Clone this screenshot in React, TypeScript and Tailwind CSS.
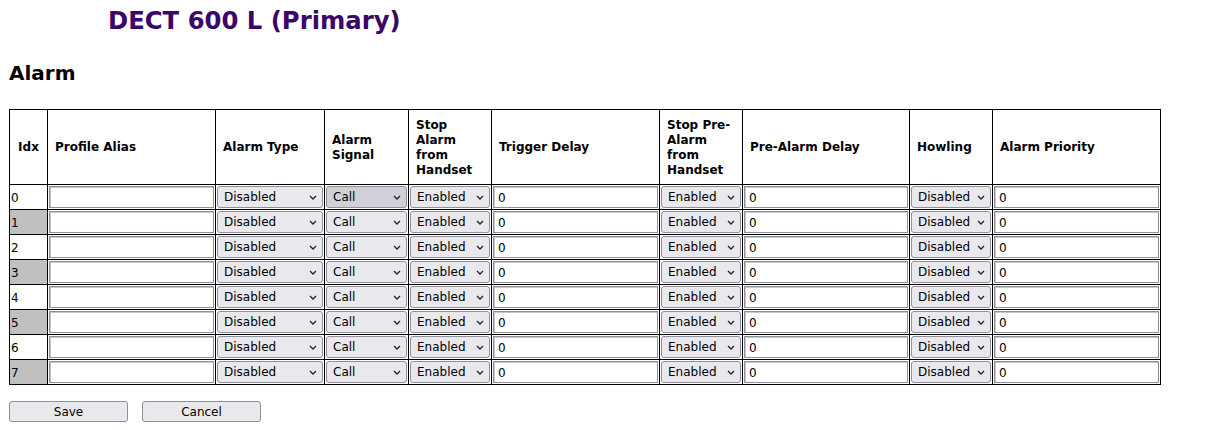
import React from "react";

const COLS = [38, 168, 109, 84, 83, 168, 83, 167, 83, 168];

const HEADERS = [
  "Idx",
  "Profile Alias",
  "Alarm Type",
  "Alarm Signal",
  "Stop Alarm from Handset",
  "Trigger Delay",
  "Stop Pre-Alarm from Handset",
  "Pre-Alarm Delay",
  "Howling",
  "Alarm Priority",
];

function Chevron() {
  return (
    <svg
      width="8"
      height="5"
      viewBox="0 0 8 5"
      className="pointer-events-none absolute right-[6px] top-[9px]"
    >
      <path d="M1 1 L4 4 L7 1" fill="none" stroke="#222" strokeWidth="1.3" />
    </svg>
  );
}

function Select({ value, dark }: { value: string; dark?: boolean }) {
  return (
    <div className="relative w-full">
      <select
        defaultValue={value}
        className={`block h-[22px] w-full appearance-none rounded-[3px] border border-[#8f8f9d] pl-[6px] pr-5 text-[12px] leading-none text-black outline-none ${
          dark ? "bg-[#d0d0d7]" : "bg-[#e9e9ed]"
        }`}
      >
        <option>{value}</option>
      </select>
      <Chevron />
    </div>
  );
}

function TextInput({ value }: { value: string }) {
  return (
    <input
      type="text"
      defaultValue={value}
      className="block h-[22px] w-full border border-[#8f8f9d] bg-white px-[4px] pt-[1px] text-[12px] text-black outline-none shadow-[inset_1px_1px_0_#c8c8c8]"
    />
  );
}

export default function App() {
  const rows = [0, 1, 2, 3, 4, 5, 6, 7];
  return (
    <div className="min-h-[430px] bg-white font-['DejaVu_Sans',sans-serif] text-black">
      <h1 className="pl-[108px] pt-[7px] text-[24.3px] font-bold leading-[28px] text-[#3c0668]">
        DECT 600 L (Primary)
      </h1>
      <h2 className="mt-[26px] pl-[9px] text-[20px] font-bold leading-[24px]">
        Alarm
      </h2>

      <div className="mt-[24px] pl-[9px]">
        <table className="w-[1151px] table-fixed border-collapse border border-black">
          <colgroup>
            {COLS.map((w, i) => (
              <col key={i} style={{ width: w }} />
            ))}
          </colgroup>
          <thead>
            <tr className="h-[75px]">
              {HEADERS.map((h, i) => (
                <th
                  key={h}
                  className={`border border-black px-[7px] pt-[1px] align-middle text-[12px] font-bold leading-[15px] ${
                    i === 0 ? "text-center" : "text-left"
                  }`}
                >
                  {h}
                </th>
              ))}
            </tr>
          </thead>
          <tbody>
            {rows.map((r) => {
              const odd = r % 2 === 1;
              return (
                <tr key={r} className="h-[25px]">
                  <td
                    className={`border border-black px-[1px] pt-[1px] text-[12px] ${
                      odd ? "bg-[#c0c0c0]" : "bg-white"
                    }`}
                  >
                    {r}
                  </td>
                  <td className="border border-black p-[1px]">
                    <TextInput value="" />
                  </td>
                  <td className="border border-black p-[1px]">
                    <Select value="Disabled" />
                  </td>
                  <td className="border border-black p-[1px]">
                    <Select value="Call" dark={r === 0} />
                  </td>
                  <td className="border border-black p-[1px]">
                    <Select value="Enabled" />
                  </td>
                  <td className="border border-black p-[1px]">
                    <TextInput value="0" />
                  </td>
                  <td className="border border-black p-[1px]">
                    <Select value="Enabled" />
                  </td>
                  <td className="border border-black p-[1px]">
                    <TextInput value="0" />
                  </td>
                  <td className="border border-black p-[1px]">
                    <Select value="Disabled" />
                  </td>
                  <td className="border border-black p-[1px]">
                    <TextInput value="0" />
                  </td>
                </tr>
              );
            })}
          </tbody>
        </table>
      </div>

      <div className="mt-[16px] flex gap-[14px] pl-[9px]">
        <button className="h-[21px] w-[119px] rounded-[3px] border border-[#8f8f9d] bg-[#e9e9ed] text-[12px] text-black">
          Save
        </button>
        <button className="h-[21px] w-[119px] rounded-[3px] border border-[#8f8f9d] bg-[#e9e9ed] text-[12px] text-black">
          Cancel
        </button>
      </div>
    </div>
  );
}
